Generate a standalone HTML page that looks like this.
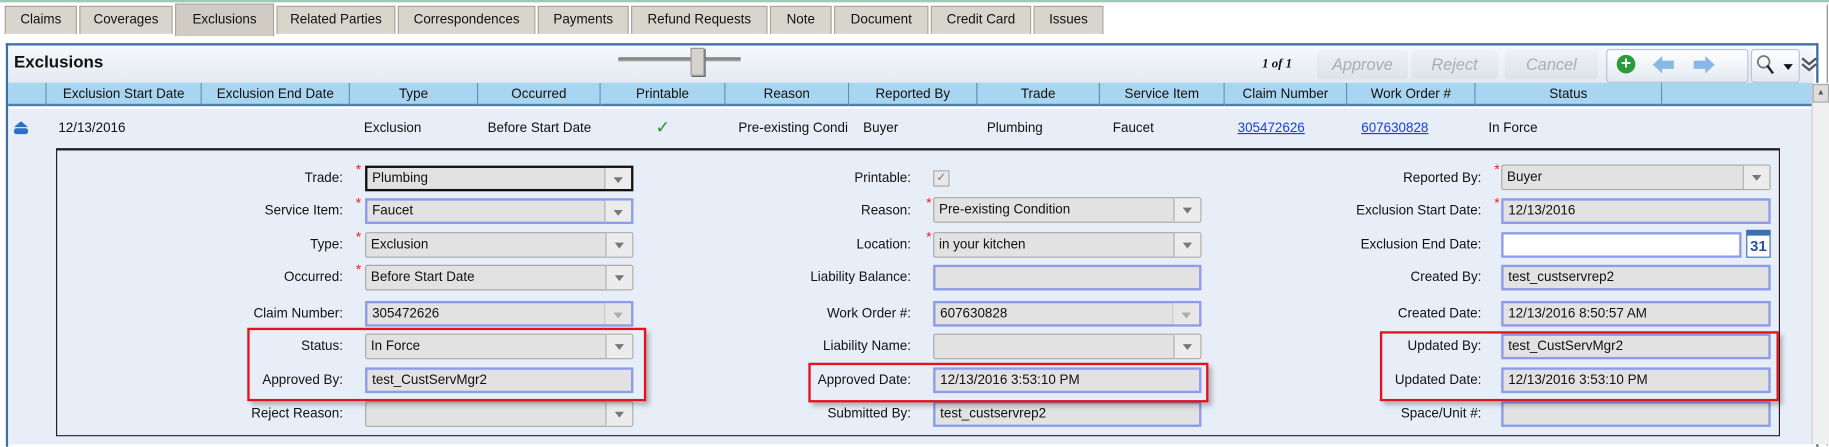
<!DOCTYPE html>
<html><head><meta charset="utf-8"><style>
body{margin:0;width:1829px;height:446px;overflow:hidden;background:#fff;font-family:"Liberation Sans","DejaVu Sans",sans-serif;}
#w{position:absolute;left:0;top:0;width:1568px;height:383px;transform:scale(1.16645);transform-origin:0 0;font-size:11.5px;color:#111;}
.a{position:absolute;}
.tab{position:absolute;top:5px;height:23px;background:#d8d5cd;border:1px solid #a9a69e;border-bottom:none;text-align:center;line-height:23px;font-size:11.5px;}
.th{position:absolute;top:71px;height:20px;line-height:20px;text-align:center;background:#a8d5ef;border-right:1px solid #5c8fb5;border-bottom:2px solid #4d7fa8;box-sizing:border-box;}
.l{position:absolute;width:200px;text-align:right;line-height:22px;}
.f{position:absolute;height:22px;box-sizing:border-box;background:#e2e2e2;border:2px solid #8c9bea;line-height:18px;padding-left:4px;}
.g{border:1px solid #a8a8a8;border-radius:2px;line-height:20px;}
.k{border:2px solid #111;}
.dd{position:absolute;right:0;top:0;bottom:0;width:22px;border-left:1px solid #b0b0b0;background:#ececec;}
.dd:after{content:"";position:absolute;left:7px;top:8px;border:4px solid transparent;border-top:5px solid #777;}
.st{position:absolute;color:#e22;font-size:12px;line-height:10px;}
.rb{position:absolute;border:2px solid #e3121b;box-shadow:3px 3px 4px rgba(0,0,0,.25);}
.btn{position:absolute;top:43px;height:25px;line-height:25px;text-align:center;font-style:italic;color:#a8aeb8;font-size:14px;background:linear-gradient(#eef1f5,#dde2ea);border-radius:3px;}
</style></head><body><div id="w">
<div class="a" style="left:0;top:0;width:1568px;height:2px;background:#9fc9b4"></div>
<div class="tab" style="left:4px;width:60px">Claims</div>
<div class="tab" style="left:68px;width:78px">Coverages</div>
<div class="tab" style="left:150px;top:3px;height:27px;line-height:27px;width:83px;background:#d0ccc4">Exclusions</div>
<div class="tab" style="left:237px;width:100px">Related Parties</div>
<div class="tab" style="left:341px;width:116px">Correspondences</div>
<div class="tab" style="left:461px;width:76px">Payments</div>
<div class="tab" style="left:541px;width:115px">Refund Requests</div>
<div class="tab" style="left:660px;width:51px">Note</div>
<div class="tab" style="left:715px;width:79px">Document</div>
<div class="tab" style="left:798px;width:84px">Credit Card</div>
<div class="tab" style="left:886px;width:58px">Issues</div>
<div class="a" style="left:1566px;top:4px;width:1px;height:378px;background:#888"></div>

<div class="a" style="left:5px;top:37px;width:1550px;height:344px;border:2px solid #3e6fa9;border-bottom:none;background:#fff"></div>
<div class="a" style="left:7px;top:39px;width:1548px;height:32px;background:linear-gradient(#f6f8fb,#e4eaf2)"></div>
<div class="a" style="left:12px;top:46px;font-weight:bold;font-size:14.5px">Exclusions</div>
<div class="a" style="left:530px;top:49px;width:105px;height:3px;background:#888;border-bottom:1px solid #ddd"></div>
<div class="a" style="left:592px;top:41px;width:10px;height:22px;background:#d6d3cc;border:1px solid #999;box-shadow:1px 1px 0 #666"></div>
<div class="a" style="left:1082px;top:49px;font-style:italic;font-weight:bold;font-size:11px;font-family:'Liberation Serif',serif">1 of 1</div>
<div class="btn" style="left:1129px;width:78px">Approve</div>
<div class="btn" style="left:1210px;width:74px">Reject</div>
<div class="btn" style="left:1290px;width:80px">Cancel</div>
<div class="a" style="left:1377px;top:42px;width:120px;height:27px;border:1px solid #b6c4d8;border-radius:3px;background:linear-gradient(#fff,#e3e9f1)"></div>
<div class="a" style="left:1386px;top:47px;width:16px;height:16px;border-radius:50%;background:#2a9a3a;color:#fff;font-weight:bold;font-size:15px;line-height:16px;text-align:center">+</div>
<svg class="a" style="left:1415px;top:47px" width="75" height="17"><path d="M2 8.5L10 1V5H20V12H10V16Z" fill="#8ab8e6"/><path d="M58 8.5L50 1V5H40V12H50V16Z" fill="#8ab8e6" transform="translate(-3 0)"/></svg>
<div class="a" style="left:1501px;top:42px;width:40px;height:27px;border:1px solid #b6c4d8;border-radius:3px;background:linear-gradient(#fff,#e3e9f1)"></div>
<svg class="a" style="left:1505px;top:46px" width="34" height="20"><circle cx="7" cy="7" r="5" fill="none" stroke="#777" stroke-width="1.5"/><path d="M10 10L15 17" stroke="#222" stroke-width="2"/><path d="M24 9h8l-4 5z" fill="#111"/></svg>
<svg class="a" style="left:1544px;top:48px" width="14" height="14"><path d="M1 2L7 7L13 2M1 7L7 12L13 7" fill="none" stroke="#556" stroke-width="2"/></svg>

<div class="a" style="left:7px;top:71px;width:1546px;height:20px;background:#a8d5ef"></div>
<div class="th" style="left:7px;width:33px"></div>
<div class="th" style="left:40px;width:133px">Exclusion Start Date</div>
<div class="th" style="left:173px;width:127px">Exclusion End Date</div>
<div class="th" style="left:300px;width:110px">Type</div>
<div class="th" style="left:410px;width:105px">Occurred</div>
<div class="th" style="left:515px;width:107px">Printable</div>
<div class="th" style="left:622px;width:106px">Reason</div>
<div class="th" style="left:728px;width:110px">Reported By</div>
<div class="th" style="left:838px;width:105px">Trade</div>
<div class="th" style="left:943px;width:107px">Service Item</div>
<div class="th" style="left:1050px;width:105px">Claim Number</div>
<div class="th" style="left:1155px;width:110px">Work Order #</div>
<div class="th" style="left:1265px;width:160px">Status</div>
<div class="th" style="left:1425px;width:128px;border-right:none"></div>
<div class="a" style="left:1553px;top:71px;width:14px;height:310px;background:#f0f0f0;border-left:1px solid #ccc"></div>
<div class="a" style="left:1554px;top:72px;width:12px;height:14px;background:#ddd;border:1px solid #aaa;font-size:7px;text-align:center;color:#555;line-height:14px">▲</div>

<div class="a" style="left:8px;top:93px;width:1545px;height:288px;background:#e8eef8"></div>
<svg class="a" style="left:10px;top:102px" width="16" height="14"><path d="M2 7L8 2L14 7Z" fill="#2f6fc8"/><rect x="2" y="8" width="12" height="5" rx="2" fill="#2f6fc8"/></svg>
<div class="a" style="left:50px;top:104px">12/13/2016</div>
<div class="a" style="left:312px;top:104px">Exclusion</div>
<div class="a" style="left:418px;top:104px">Before Start Date</div>
<div class="a" style="left:562px;top:100px;color:#2b8f2b;font-weight:bold;font-size:15px">✓</div>
<div class="a" style="left:633px;top:104px">Pre-existing Condi</div>
<div class="a" style="left:740px;top:104px">Buyer</div>
<div class="a" style="left:846px;top:104px">Plumbing</div>
<div class="a" style="left:954px;top:104px">Faucet</div>
<div class="a" style="left:1061px;top:104px;color:#1a3fd8;text-decoration:underline">305472626</div>
<div class="a" style="left:1167px;top:104px;color:#1a3fd8;text-decoration:underline">607630828</div>
<div class="a" style="left:1276px;top:104px">In Force</div>

<div class="a" style="left:48px;top:127px;width:1476px;height:244px;border:1px solid #222;border-top:2px solid #222"></div>

<!-- col1 -->
<div class="l" style="left:94px;top:142px">Trade:</div>
<div class="l" style="left:94px;top:170px">Service Item:</div>
<div class="l" style="left:94px;top:199px">Type:</div>
<div class="l" style="left:94px;top:227px">Occurred:</div>
<div class="l" style="left:94px;top:258px">Claim Number:</div>
<div class="l" style="left:94px;top:286px">Status:</div>
<div class="l" style="left:94px;top:315px">Approved By:</div>
<div class="l" style="left:94px;top:344px">Reject Reason:</div>
<div class="st" style="left:305px;top:140px">*</div><div class="st" style="left:305px;top:169px">*</div><div class="st" style="left:305px;top:198px">*</div><div class="st" style="left:305px;top:226px">*</div>
<div class="f k" style="left:313px;top:142px;width:230px">Plumbing<div class="dd"></div></div>
<div class="f" style="left:313px;top:170px;width:230px">Faucet<div class="dd"></div></div>
<div class="f g" style="left:313px;top:199px;width:230px">Exclusion<div class="dd"></div></div>
<div class="f g" style="left:313px;top:227px;width:230px">Before Start Date<div class="dd"></div></div>
<div class="f" style="left:313px;top:258px;width:230px">305472626<div class="dd" style="opacity:.5"></div></div>
<div class="f g" style="left:313px;top:286px;width:230px">In Force<div class="dd"></div></div>
<div class="f" style="left:313px;top:315px;width:230px">test_CustServMgr2</div>
<div class="f g" style="left:313px;top:344px;width:230px"><div class="dd"></div></div>
<div class="rb" style="left:212px;top:281px;width:338px;height:59px"></div>

<!-- col2 -->
<div class="l" style="left:581px;top:142px">Printable:</div>
<div class="l" style="left:581px;top:170px">Reason:</div>
<div class="l" style="left:581px;top:199px">Location:</div>
<div class="l" style="left:581px;top:227px">Liability Balance:</div>
<div class="l" style="left:581px;top:258px">Work Order #:</div>
<div class="l" style="left:581px;top:286px">Liability Name:</div>
<div class="l" style="left:581px;top:315px">Approved Date:</div>
<div class="l" style="left:581px;top:344px">Submitted By:</div>
<div class="a" style="left:800px;top:146px;width:12px;height:12px;border:1px solid #aaa;background:#e8e8e8;font-size:10px;line-height:12px;text-align:center;color:#777">✓</div>
<div class="st" style="left:794px;top:169px">*</div><div class="st" style="left:794px;top:198px">*</div>
<div class="f g" style="left:800px;top:169px;width:230px">Pre-existing Condition<div class="dd"></div></div>
<div class="f g" style="left:800px;top:199px;width:230px">in your kitchen<div class="dd"></div></div>
<div class="f" style="left:800px;top:227px;width:230px"></div>
<div class="f" style="left:800px;top:258px;width:230px">607630828<div class="dd" style="opacity:.5"></div></div>
<div class="f g" style="left:800px;top:286px;width:230px"><div class="dd"></div></div>
<div class="f" style="left:800px;top:315px;width:230px">12/13/2016 3:53:10 PM</div>
<div class="f" style="left:800px;top:344px;width:230px">test_custservrep2</div>
<div class="rb" style="left:693px;top:311px;width:339px;height:30px"></div>

<!-- col3 -->
<div class="l" style="left:1070px;top:142px">Reported By:</div>
<div class="l" style="left:1070px;top:170px">Exclusion Start Date:</div>
<div class="l" style="left:1070px;top:199px">Exclusion End Date:</div>
<div class="l" style="left:1070px;top:227px">Created By:</div>
<div class="l" style="left:1070px;top:258px">Created Date:</div>
<div class="l" style="left:1070px;top:286px">Updated By:</div>
<div class="l" style="left:1070px;top:315px">Updated Date:</div>
<div class="l" style="left:1070px;top:344px">Space/Unit #:</div>
<div class="st" style="left:1281px;top:140px">*</div><div class="st" style="left:1281px;top:169px">*</div>
<div class="f g" style="left:1287px;top:141px;width:231px">Buyer<div class="dd"></div></div>
<div class="f" style="left:1287px;top:170px;width:231px">12/13/2016</div>
<div class="f" style="left:1287px;top:199px;width:206px;background:#fff"></div>
<div class="a" style="left:1497px;top:197px;width:21px;height:24px;background:#fff;border:1px solid #3b6fb8;border-top:5px solid #3b6fb8;box-sizing:border-box;color:#2653a8;font-weight:bold;font-size:13px;text-align:center;line-height:18px">31</div>
<div class="f" style="left:1287px;top:227px;width:231px">test_custservrep2</div>
<div class="f" style="left:1287px;top:258px;width:231px">12/13/2016 8:50:57 AM</div>
<div class="f" style="left:1287px;top:286px;width:231px">test_CustServMgr2</div>
<div class="f" style="left:1287px;top:315px;width:231px">12/13/2016 3:53:10 PM</div>
<div class="f" style="left:1287px;top:344px;width:231px"></div>
<div class="rb" style="left:1183px;top:284px;width:338px;height:56px"></div>
</div></body></html>
